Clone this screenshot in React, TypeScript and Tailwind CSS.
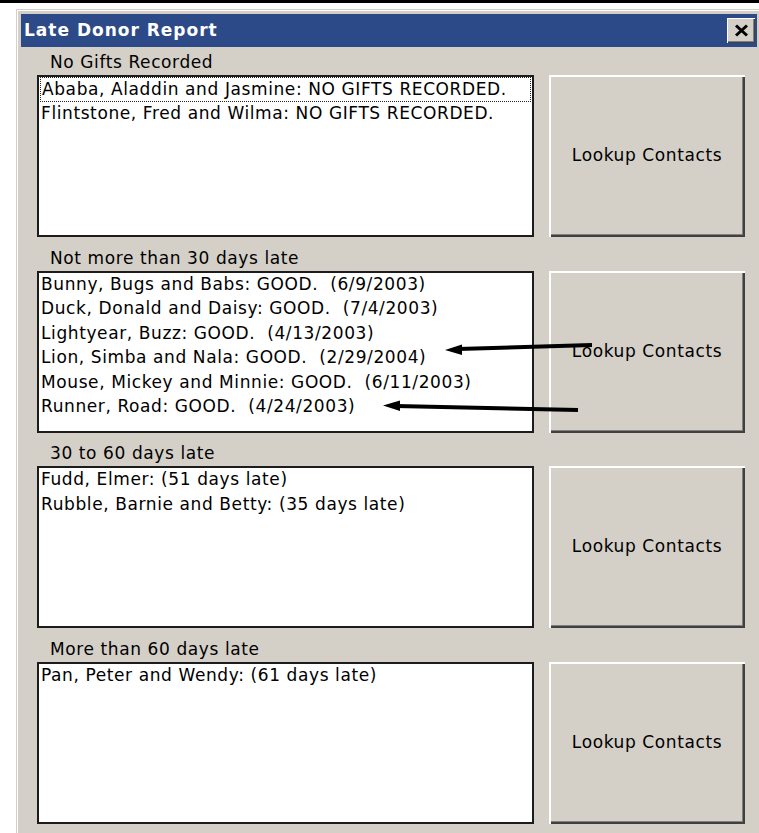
import React from "react";

type Section = {
  label: string;
  rows: string[];
  focusFirst?: boolean;
};

const sections: Section[] = [
  {
    label: "No Gifts Recorded",
    rows: [
      "Ababa, Aladdin and Jasmine: NO GIFTS RECORDED.",
      "Flintstone, Fred and Wilma: NO GIFTS RECORDED.",
    ],
    focusFirst: true,
  },
  {
    label: "Not more than 30 days late",
    rows: [
      "Bunny, Bugs and Babs: GOOD.  (6/9/2003)",
      "Duck, Donald and Daisy: GOOD.  (7/4/2003)",
      "Lightyear, Buzz: GOOD.  (4/13/2003)",
      "Lion, Simba and Nala: GOOD.  (2/29/2004)",
      "Mouse, Mickey and Minnie: GOOD.  (6/11/2003)",
      "Runner, Road: GOOD.  (4/24/2003)",
    ],
  },
  {
    label: "30 to 60 days late",
    rows: ["Fudd, Elmer: (51 days late)", "Rubble, Barnie and Betty: (35 days late)"],
  },
  {
    label: "More than 60 days late",
    rows: ["Pan, Peter and Wendy: (61 days late)"],
  },
];

const ListBox = ({ rows, focusFirst }: { rows: string[]; focusFirst?: boolean }) => (
  <div className="w-[497px] h-full bg-white border-2 border-[#1c1c1c] px-[1px] overflow-hidden">
    {rows.map((row, i) => (
      <div
        key={row}
        className={`h-[24.6px] leading-[23px] pl-[1px] whitespace-pre ${
          focusFirst && i === 0 ? "border border-dotted border-[#222] leading-[21px]" : ""
        }`}
      >
        {row}
      </div>
    ))}
  </div>
);

const LookupButton = () => (
  <button className="w-[196px] h-full bg-[#d4d0c8] text-black text-[17px] tracking-[0.6px] shadow-[inset_2px_2px_0_#ffffff,inset_-2px_-2px_0_#404040,inset_-3px_-3px_0_#808080]">
    Lookup Contacts
  </button>
);

export default function App() {
  return (
    <div className="relative w-[759px] h-[833px] overflow-hidden bg-white font-['DejaVu_Sans',sans-serif] text-[17px] tracking-[0.6px] text-black">
      <div className="h-[3px] bg-black" />

      {/* dialog window */}
      <div className="mt-[6px] ml-[16px] w-[745px] h-[900px] bg-[#d4d0c8] border-t border-l border-[#d4d0c8] p-[4px] shadow-[inset_1px_1px_0_#ffffff]">
        <div className="h-[33px] bg-[#2d4a88] flex items-center justify-between pl-[3px] pr-[2px]">
          <span className="text-white font-bold text-[17px] tracking-[1px]">Late Donor Report</span>
          <button className="w-[28px] h-[25px] bg-[#d4d0c8] flex items-center justify-center shadow-[inset_1px_1px_0_#ffffff,inset_-1px_-1px_0_#404040,inset_-2px_-2px_0_#808080]">
            <svg width="15" height="13" viewBox="0 0 15 13">
              <path d="M2 1.5 L13 11.5 M13 1.5 L2 11.5" stroke="#000" strokeWidth="3" />
            </svg>
          </button>
        </div>

        <div className="pl-[16px] flex flex-col gap-[5.5px]">
          {sections.map((s) => (
            <div key={s.label} className="flex flex-col">
              <div className="h-[28px] pl-[13px] pt-[1px] leading-[28px]">{s.label}</div>
              <div className="h-[162px] flex gap-[15px]">
                <ListBox rows={s.rows} focusFirst={s.focusFirst} />
                <LookupButton />
              </div>
            </div>
          ))}
        </div>
      </div>

      {/* hand-drawn pointer arrows */}
      <svg className="absolute inset-0 pointer-events-none" width="759" height="833" viewBox="0 0 759 833">
        <path d="M592 345 L458 349" stroke="#000" strokeWidth="4" />
        <polygon points="445,350 462,344.5 462,355" fill="#000" />
        <path d="M578 410 L396 406" stroke="#000" strokeWidth="4" />
        <polygon points="383,405.5 400,400.5 400,411" fill="#000" />
      </svg>
    </div>
  );
}
